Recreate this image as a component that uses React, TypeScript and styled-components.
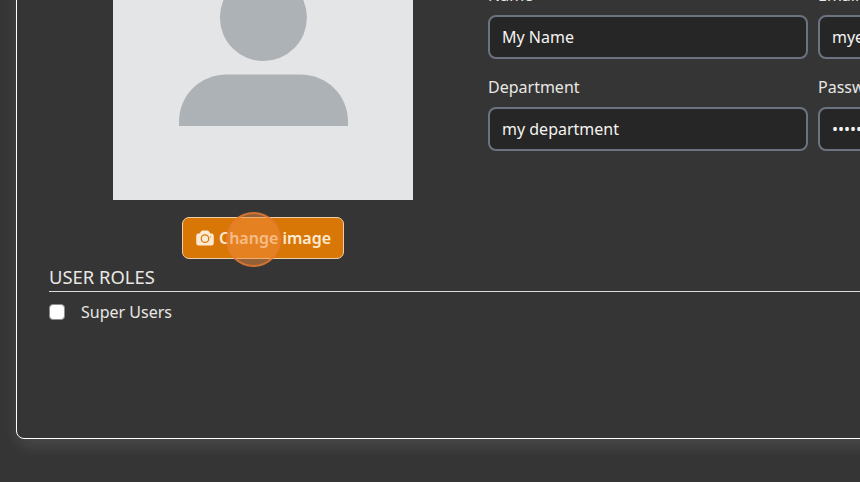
import React from "react";
import styled, { createGlobalStyle } from "styled-components";

const GlobalStyle = createGlobalStyle`
  *, *::before, *::after { box-sizing: border-box; }
  body {
    margin: 0;
    background: #353535;
    color: #e9e7e4;
    font: 16px/24px "Noto Sans", sans-serif;
    overflow: hidden;
  }
`;

const Page = styled.main`
  display: flex;
  height: 482px;
  overflow: hidden;
`;

const Card = styled.section`
  flex: none;
  width: 1180px;
  height: 540px;
  margin: -101px 0 0 16px;
  padding: 0 32px;
  border: 1px solid #fff;
  border-radius: 8px;
  background: #353535;
  box-shadow: 0 10px 17px -3px rgba(255, 255, 255, 0.08),
    0 4px 22px rgba(255, 255, 255, 0.05);
`;

const Profile = styled.div`
  display: flex;
  height: 364px;
`;

const PhotoColumn = styled.div`
  flex: none;
  width: 428px;
  display: flex;
  flex-direction: column;
  align-items: center;
  gap: 16px;
`;

const Avatar = styled.svg`
  display: block;
  flex: none;
  width: 300px;
  height: 300px;
  background: #e4e5e7;
`;

const ChangeButton = styled.button`
  position: relative;
  display: flex;
  align-items: center;
  justify-content: center;
  gap: 4px;
  width: 162px;
  height: 42px;
  margin-top: 0.5px;
  padding: 0;
  border: 1px solid #edd0ab;
  border-radius: 7px;
  background: #d97706;
  color: #fcead2;
  font: 600 16px/24px "Noto Sans", sans-serif;
`;

const CameraIcon = styled.svg`
  width: 20px;
  height: 20px;
`;

const ClickMarker = styled.span`
  position: absolute;
  left: 43px;
  top: -6px;
  width: 55px;
  height: 55px;
  border: 2px solid rgba(231, 122, 48, 0.75);
  border-radius: 50%;
  background: rgba(242, 139, 58, 0.5);
`;

const Fields = styled.div`
  display: grid;
  grid-template-columns: 320px 320px;
  align-content: start;
  gap: 16px 10px;
  margin: 83px 0 0 11px;
`;

const Field = styled.label`
  display: flex;
  flex-direction: column;
  gap: 8px;
`;

const Input = styled.input`
  width: 100%;
  height: 44px;
  padding: 0 12px;
  border: 2px solid #6b7280;
  border-radius: 8px;
  background: #262626;
  color: #f5f3f0;
  font: 16px/24px "Noto Sans", sans-serif;
`;

const RolesTitle = styled.h2`
  height: 28px;
  margin: 0;
  border-bottom: 1px solid #dedbd8;
  font-size: 18.4px;
  font-weight: 400;
  line-height: 25px;
`;

const Role = styled.label`
  display: flex;
  align-items: center;
  gap: 16px;
  margin-top: 8px;
`;

const Checkbox = styled.input`
  appearance: none;
  width: 16px;
  height: 16px;
  margin: 0;
  border: 1px solid #8b8d91;
  border-radius: 4px;
  background: #fff;
`;

const fields = [
  { label: "Name", value: "My Name", type: "text" },
  { label: "Email", value: "myemail@example.com", type: "text" },
  { label: "Department", value: "my department", type: "text" },
  { label: "Password", value: "password", type: "password" },
];

export default function App() {
  return (
    <>
      <GlobalStyle />
      <Page>
        <Card>
          <Profile>
            <PhotoColumn>
              <Avatar viewBox="0 0 300 300" aria-label="Profile picture">
                <g fill="#adb2b6">
                  <circle cx="150.4" cy="117.5" r="43.5" />
                  <path d="M66 226v-4c0-27 21-47.5 48-47.5h73c27 0 48 20.500 48 47.500v4z" />
                </g>
              </Avatar>
              <ChangeButton type="button">
                <CameraIcon viewBox="0 0 24 24" fill="currentColor">
                  <path d="M12 9a3.75 3.75 0 1 0 0 7.5A3.75 3.75 0 0 0 12 9Z" />
                  <path
                    fillRule="evenodd"
                    clipRule="evenodd"
                    d="M9.344 3.071a49.520 49.520 0 0 1 5.312 0c.967.052 1.830.585 2.332 1.390l.821 1.317c.240.383.645.643 1.110.710.386.054.770.113 1.152.177 1.432.239 2.429 1.493 2.429 2.909V18a3 3 0 0 1-3 3h-15a3 3 0 0 1-3-3V9.574c0-1.416.997-2.670 2.429-2.909.382-.064.766-.123 1.151-.178a1.560 1.560 0 0 0 1.110-.710l.822-1.315a2.942 2.942 0 0 1 2.332-1.390ZM6.750 12.750a5.250 5.250 0 1 1 10.500 0 5.250 5.250 0 0 1-10.500 0Zm12-1.500a.750.750 0 1 0 0-1.500.750.750 0 0 0 0 1.500Z"
                  />
                </CameraIcon>
                Change image
                <ClickMarker />
              </ChangeButton>
            </PhotoColumn>
            <Fields>
              {fields.map((field) => (
                <Field key={field.label}>
                  {field.label}
                  <Input type={field.type} defaultValue={field.value} />
                </Field>
              ))}
            </Fields>
          </Profile>
          <RolesTitle>USER ROLES</RolesTitle>
          <Role>
            <Checkbox type="checkbox" />
            Super Users
          </Role>
        </Card>
      </Page>
    </>
  );
}
